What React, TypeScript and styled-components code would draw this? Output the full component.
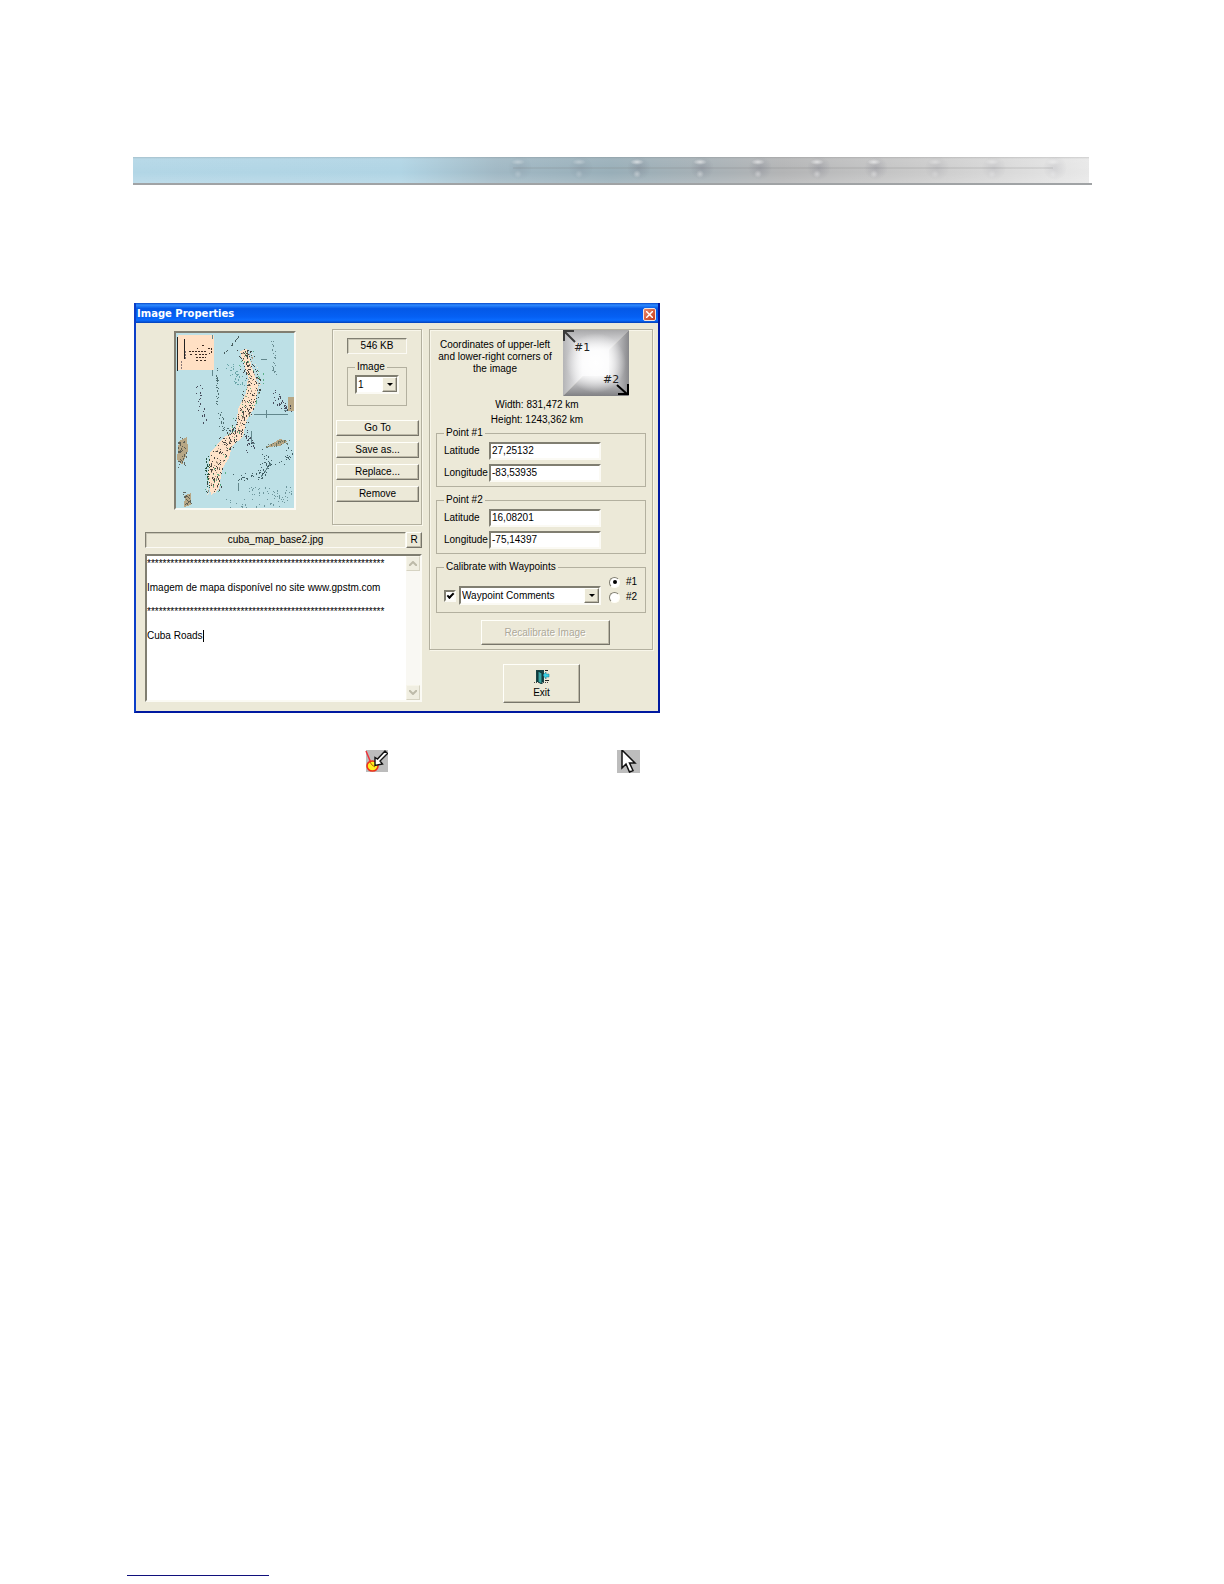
import React, { useState } from "react";
import styled, { createGlobalStyle, css } from "styled-components";

const face = "#ece9d8";
const line = "#b3b09f";
const dark = "#807e71";

const GlobalStyle = createGlobalStyle`
  *, *::before, *::after { box-sizing: border-box; }
  body { margin: 0; background: #fff; }
  button, input, select, textarea, fieldset, legend { font: inherit; color: inherit; margin: 0; border-radius: 0; }
`;

const sunken = css`
  border: 2px solid;
  border-color: ${dark} #fbfaf4 #fbfaf4 ${dark};
`;
const raised = css`
  border: 1px solid;
  border-color: #fffffa #77756a #77756a #fffffa;
  box-shadow: inset -1px -1px 0 #bdb9a8;
  background: ${face};
`;

const Page = styled.div`
  min-height: 100vh;
  padding: 157px 132px 8px 133px;
  display: flex;
  flex-direction: column;
  font: 10px/12px "Liberation Sans", Arial, sans-serif;
  color: #000;
`;

const Banner = styled.header`
  height: 28px;
  padding-right: 3px;
  border-bottom: 2px solid #a0a3a5;
`;
const BannerArt = styled.svg`
  display: block;
  width: 100%;
  height: 26px;
`;

const Dialog = styled.section`
  margin: 118px 0 0 1px;
  max-width: 526px;
  border: 2px solid #0c3fc8;
  border-top: 0;
  border-right-color: #0019a0;
  border-bottom-color: #0019a0;
  background: ${face};
`;
const TitleBar = styled.div`
  height: 20px;
  padding: 2px 2px 0 1px;
  display: flex;
  align-items: center;
  justify-content: space-between;
  background: linear-gradient(#0a48c8 0, #2f8bff 10%, #0458e6 28%, #0560f4 70%, #0a6cff 86%, #0340b8 100%);
`;
const Title = styled.h1`
  margin: 0;
  font: bold 10px/16px "DejaVu Sans", Verdana, sans-serif;
  color: #fff;
`;
const CloseButton = styled.button`
  width: 13px;
  height: 13px;
  padding: 0;
  display: grid;
  place-items: center;
  border: 1px solid #f6e4dc;
  border-radius: 2px;
  background: linear-gradient(135deg, #e88a6c, #c63a18);
`;
const Body = styled.div`
  padding: 6px 5px 8px 9px;
  display: grid;
  grid-template-columns: 277px minmax(0, 1fr);
  column-gap: 7px;
`;
const Column = styled.div`
  display: flex;
  flex-direction: column;
`;
const TopRow = styled.div`
  display: grid;
  grid-template-columns: 1fr 90px;
  height: 196px;
`;
const MapFrame = styled.div`
  ${sunken}
  margin: 2px 0 0 29px;
  width: 122px;
  height: 179px;
`;
const Panel = styled.div`
  border: 1px solid ${line};
  box-shadow: inset 1px 1px 0 #f8f6ea, 1px 1px 0 #f8f6ea;
`;
const ToolPanel = styled(Panel)`
  padding: 8px 2px 0 3px;
  display: flex;
  flex-direction: column;
`;
const Readout = styled.output`
  display: block;
  border: 1px solid;
  border-color: ${dark} #fbfaf4 #fbfaf4 ${dark};
  box-shadow: inset 1px 1px 0 #c9c6b5;
  height: 16px;
  line-height: 14px;
  text-align: center;
`;
const SizeReadout = styled(Readout)`
  margin: 0 12px 0 11px;
`;
const Group = styled.fieldset`
  min-width: 0;
  border: 1px solid ${line};
  padding: 0 7px;
`;
const Legend = styled.legend`
  padding: 0 2px;
`;
const ImageGroup = styled(Group)`
  margin: 7px 12px 0 11px;
  height: 45px;
  padding: 2px 7px 0;
`;
const ButtonStack = styled.div`
  margin-top: 14px;
  display: grid;
  gap: 6px;
`;
const Button = styled.button`
  ${raised}
  height: 16px;
  padding: 0;
  line-height: 12px;
  text-align: center;
`;
const SelectBox = styled.div`
  ${sunken}
  position: relative;
  height: 19px;
  background: #fff;
`;
const Select = styled.select`
  display: block;
  width: 100%;
  height: 15px;
  padding: 0 16px 0 1px;
  border: 0;
  outline: 0;
  appearance: none;
  background: transparent;
`;
const Arrow = styled.span`
  ${raised}
  position: absolute;
  top: 0;
  right: 0;
  width: 15px;
  height: 15px;
  display: grid;
  place-items: center;
  pointer-events: none;
`;
const FileRow = styled.div`
  margin-top: 7px;
  display: grid;
  grid-template-columns: 1fr 16px;
`;
const MemoBox = styled.div`
  ${sunken}
  position: relative;
  margin-top: 6px;
  height: 148px;
  display: grid;
  grid-template-columns: 1fr 14px;
  background: #fff;
`;
const Memo = styled.textarea`
  display: block;
  height: 144px;
  padding: 2px 0;
  border: 0;
  outline: 0;
  resize: none;
  overflow: hidden;
  background: #fff;
  line-height: 12px;
`;
const Caret = styled.span`
  position: absolute;
  left: 56px;
  top: 74px;
  width: 1px;
  height: 12px;
  background: #000;
`;
const ScrollBar = styled.div`
  display: flex;
  flex-direction: column;
  justify-content: space-between;
  background: #f9f8f3;
`;
const ScrollButton = styled.button`
  height: 15px;
  padding: 0;
  display: grid;
  place-items: center;
  border: 1px solid;
  border-color: #f7f5ea #d6d3c2 #d6d3c2 #f7f5ea;
  background: #f0eee1;
`;
const CalibPanel = styled(Panel)`
  height: 321px;
  padding: 0 6px;
  display: flex;
  flex-direction: column;
`;
const Intro = styled.div`
  display: grid;
  grid-template-columns: 118px 66px;
  column-gap: 9px;
  height: 67px;
  text-align: center;
`;
const IntroText = styled.p`
  margin: 9px 0 0;
`;
const Sizes = styled.p`
  margin: 0 8px 0 0;
  line-height: 15px;
  text-align: center;
`;
const PointGroup = styled(Group)`
  height: 60px;
  padding-top: 3px;
  margin-bottom: 7px;
  display: grid;
  grid-template-columns: 45px 112px;
  grid-auto-rows: 17px;
  row-gap: 5px;
  align-items: center;
`;
const TextInput = styled.input`
  ${sunken}
  width: 100%;
  height: 18px;
  padding: 0 1px;
  background: #fff;
  outline: 0;
`;
const CalibGroup = styled(Group)`
  height: 52px;
`;
const CalibRow = styled.div`
  padding-top: 3px;
  display: grid;
  grid-template-columns: 11px 142px 1fr;
  column-gap: 4px;
  align-items: end;
`;
const Check = styled.input`
  appearance: none;
  ${sunken}
  width: 12px;
  height: 12px;
  align-self: end;
  && { margin-bottom: 3px; }
  background: #fff;
  display: grid;
  place-items: center;
  &:checked::before {
    content: "";
    width: 7px;
    height: 4px;
    border: solid #000;
    border-width: 0 0 2px 2px;
    transform: translateY(-1px) rotate(-45deg);
  }
`;
const Radios = styled.div`
  padding: 0 0 2px 4px;
  display: grid;
  gap: 3px;
`;
const RadioLabel = styled.label`
  display: flex;
  align-items: center;
  gap: 6px;
`;
const Radio = styled.input`
  appearance: none;
  width: 11px;
  height: 11px;
  && { border-radius: 50%; }
  border: 1px solid;
  border-color: ${dark} #fffef5 #fffef5 ${dark};
  background: #fff;
  display: grid;
  place-items: center;
  &:checked::before {
    content: "";
    width: 4px;
    height: 4px;
    border-radius: 50%;
    background: #000;
  }
`;
const Recalibrate = styled(Button)`
  align-self: center;
  width: 129px;
  height: 25px;
  margin: 7px 0 0 8px;
  color: #aca899;
  text-shadow: 1px 1px 0 #fff;
`;
const ExitButton = styled(Button)`
  width: 77px;
  height: 39px;
  margin: 14px 0 0 74px;
  display: flex;
  flex-direction: column;
  align-items: center;
  justify-content: center;
  gap: 3px;
`;
const IconRow = styled.div`
  margin: 37px 0 0 232px;
  display: flex;
  gap: 229px;
`;
const Footer = styled.footer`
  margin: auto 0 0 -6px;
  width: 142px;
  border-bottom: 1px solid #10107c;
`;

/* Small seeded generator, so the map's stippling is the same on each draw. */
function seeded(seed: number) {
  let s = seed;
  return () => {
    s = (s * 16807) % 2147483647;
    return s / 2147483647;
  };
}
type Blob = { pts: [number, number][]; spread: number; n: number; color: string };
const spine: [number, number][] = [[68, 19], [71, 30], [77, 42], [77, 56], [72, 70], [67, 84], [60, 98], [48, 112], [41, 126], [38, 142], [38, 158]];
const blobs: Blob[] = [
  { pts: spine, spread: 15, n: 330, color: "#2a2a28" },
  { pts: spine, spread: 14, n: 130, color: "#ffe8d0" },
  { pts: spine, spread: 13, n: 90, color: "#a08c78" },
  { pts: spine, spread: 20, n: 60, color: "#4aa878" },
  { pts: [[52, 30], [60, 44], [68, 50]], spread: 14, n: 40, color: "#5a9a9c" },
  { pts: [[41, 35], [41, 76]], spread: 2, n: 26, color: "#3b5b5d" },
  { pts: [[44, 80], [46, 96], [54, 96]], spread: 5, n: 22, color: "#3b5b5d" },
  { pts: [[97, 8], [98, 42]], spread: 5, n: 20, color: "#5b7e82" },
  { pts: [[48, 20], [62, 3]], spread: 1, n: 14, color: "#344" },
  { pts: [[22, 52], [24, 70], [29, 88]], spread: 7, n: 26, color: "#334" },
  { pts: [[97, 60], [104, 70], [110, 76]], spread: 11, n: 36, color: "#334" },
  { pts: [[6, 106], [6, 132]], spread: 9, n: 50, color: "#50524a" },
  { pts: [[10, 160], [12, 172]], spread: 7, n: 24, color: "#50524a" },
  { pts: [[92, 114], [112, 107]], spread: 7, n: 26, color: "#5d6a58" },
  { pts: [[90, 118], [88, 132], [112, 126], [112, 116]], spread: 9, n: 40, color: "#2e4a50" },
  { pts: [[90, 134], [84, 144], [58, 143]], spread: 10, n: 40, color: "#2e4a50" },
  { pts: [[70, 158], [112, 158], [98, 170], [50, 170]], spread: 14, n: 66, color: "#5f888e" },
  { pts: [[31, 124], [31, 158]], spread: 4, n: 34, color: "#0c3a20" },
  { pts: [[68, 100], [75, 116]], spread: 9, n: 30, color: "#334" },
];
function stipple(b: Blob, seed: number) {
  const rnd = seeded(seed);
  let d = "";
  for (let i = 0; i < b.n; i++) {
    const t = rnd() * (b.pts.length - 1);
    const k = Math.floor(t);
    const f = t - k;
    const [ax, ay] = b.pts[k];
    const [bx, by] = b.pts[k + 1];
    const x = Math.round(ax + (bx - ax) * f + (rnd() - 0.5) * b.spread);
    const y = Math.round(ay + (by - ay) * f + (rnd() - 0.5) * b.spread * 0.7);
    d += `M${x} ${y}h1v${rnd() > 0.8 ? 2 : 1}h-1z`;
  }
  return d;
}

const MapArt = () => (
  <svg width="118" height="175" viewBox="0 0 118 175" role="img" display="block" shapeRendering="crispEdges">
    <rect width="118" height="175" fill="#bde0e6" />
    <rect x="2" y="2" width="36" height="35" fill="#ffe0c4" />
    <path d="M1 4v34M8 6v20" stroke="#222" fill="none" />
    <path d="M5 28v8M9 18v9" stroke="#877" strokeDasharray="2 1" fill="none" />
    <path d="M13 18h18M14 21h3M19 21h2M23 21h8M20 24h10M20 27h2M24 27h2M28 27h3M21 15h1M26 12h2M32 15h3v5h-2" stroke="#3b2a20" strokeDasharray="2 1" fill="none" />
    <path d="M64 18l7-2 6 22 5 14-3 22-9 14-3 16-11 9-3 12-7 11-3 20-8 6-3-18 2-24 14-16 12-6 2-22 8-16 2-16-6-20z" fill="#ffe2c8" />
    <path d="M3 108l8-4 1 14-6 14-5-6zM9 162l6-2v12l-7 2zM112 64h6v14h-6zM90 114l14-8 8 2-8 5z" fill="#b7a785" />
    <path d="M78 81h34M90 77v8M36 2v4M36 37v6M97 34v4M91 26h-6M108 77h4M75 98v12h4M85 144l10-14M62 158v-8" stroke="#62878c" fill="none" />
    {blobs.map((b, i) => (
      <path key={i} d={stipple(b, 91 + i * 37)} fill={b.color} fillOpacity="0.85" />
    ))}
  </svg>
);

const CornersArt = () => (
  <svg width="66" height="66" viewBox="0 0 66 66" role="img">
    <defs>
      <linearGradient id="t" x1="0" y1="0" x2="0" y2="1"><stop offset="0" stopColor="#a9a9ab" /><stop offset="1" stopColor="#f4f4f6" /></linearGradient>
      <linearGradient id="l" x1="0" y1="0" x2="1" y2="0"><stop offset="0" stopColor="#b4b4b6" /><stop offset="1" stopColor="#f6f6f8" /></linearGradient>
      <linearGradient id="r" x1="1" y1="0" x2="0" y2="0"><stop offset="0" stopColor="#88888b" /><stop offset="1" stopColor="#e6e6e8" /></linearGradient>
      <linearGradient id="b" x1="0" y1="1" x2="0" y2="0"><stop offset="0" stopColor="#808083" /><stop offset="1" stopColor="#e2e2e4" /></linearGradient>
      <radialGradient id="c"><stop offset="0" stopColor="#fff" /><stop offset="0.4" stopColor="#fff" stopOpacity="0.8" /><stop offset="1" stopColor="#fff" stopOpacity="0" /></radialGradient>
    </defs>
    <path d="M0 0h66L46 20H20z" fill="url(#t)" />
    <path d="M0 0l20 20v26L0 66z" fill="url(#l)" />
    <path d="M66 0v66L46 46V20z" fill="url(#r)" />
    <path d="M0 66h66L46 46H20z" fill="url(#b)" />
    <path d="M20 20h26v26H20z" fill="#f4f4f6" />
    <circle cx="33" cy="33" r="30" fill="url(#c)" />
    <path d="M1 11V1h10M1 1l11 11" stroke="#3a3a3a" strokeWidth="2" fill="none" />
    <path d="M65 54v10H55M64 64L54 55" stroke="#000" strokeWidth="2" fill="none" />
    <text x="11" y="21" fontFamily="DejaVu Sans" fontSize="11" fill="#222">#1</text>
    <text x="40" y="53" fontFamily="DejaVu Sans" fontSize="11" fill="#222">#2</text>
  </svg>
);

const Triangle = () => (
  <svg width="6" height="3" viewBox="0 0 6 3"><path d="M0 0h6L3 3z" fill="#000" /></svg>
);
const Chevron = ({ up }: { up?: boolean }) => (
  <svg width="8" height="5" viewBox="0 0 8 5"><path d={up ? "M0 5l4-4 4 4" : "M0 0l4 4 4-4"} fill="none" stroke="#bdbaa9" strokeWidth="2" /></svg>
);
const ExitIcon = () => (
  <svg width="16" height="15" viewBox="0 0 16 15">
    <path d="M2 13V1h8v12" fill="#174446" />
    <path d="M4 2l4 2v11l-4-2z" fill="#3aa5a5" stroke="#0c3032" />
    <path d="M9 6l3-3v2h3v3h-3v2z" fill="#38d3e8" stroke="#1b6f80" strokeWidth="0.5" />
    <path d="M11 1.500h3M11 11.500h4" stroke="#222" />
    <path d="M0 13.500h3M9 13.500h6" stroke="#444" strokeDasharray="1 1" />
  </svg>
);
const CalibrateIcon = () => (
  <svg width="23" height="23" viewBox="0 0 23 23">
    <rect x="1" width="22" height="22" fill="#bcbcbc" />
    <path d="M1 1l5 12" stroke="#ee3038" strokeWidth="1.500" />
    <ellipse cx="7.500" cy="16" rx="5.500" ry="5" fill="#ffee20" stroke="#f0301c" strokeWidth="1.600" />
    <path d="M5 12l2 3 3 2" stroke="#c06010" fill="none" />
    <path d="M20 1l2.500 2.500-7.500 7.500 2.500 3-7.500 1.500V7.500l2.500 1.500z" fill="#fff" stroke="#111" strokeWidth="1.400" />
  </svg>
);
const CursorIcon = () => (
  <svg width="23" height="23" viewBox="0 0 23 23">
    <rect width="23" height="23" fill="#bdbdbd" />
    <path d="M5 0v18l4-4 3.500 8 3.500-1.500-3.500-7.500H18z" fill="#fff" stroke="#111" strokeWidth="1.500" />
  </svg>
);

const rivets = [385, 446, 504, 567, 625, 684, 741, 802, 859, 920];
const BannerDrawing = () => (
  <BannerArt viewBox="0 0 956 26" preserveAspectRatio="none">
    <defs>
      <linearGradient id="bar">
        <stop offset="0" stopColor="#b2d6e6" /><stop offset="0.28" stopColor="#b0d4e4" />
        <stop offset="0.38" stopColor="#a0b8c4" /><stop offset="0.5" stopColor="#98aeb8" />
        <stop offset="0.6" stopColor="#a6b0b5" /><stop offset="0.68" stopColor="#b3b4b5" />
        <stop offset="0.82" stopColor="#c9c9c9" /><stop offset="1" stopColor="#e8e8e8" />
      </linearGradient>
      <linearGradient id="sheen" x1="0" y1="0" x2="0" y2="1">
        <stop offset="0" stopColor="#777" stopOpacity="0.25" /><stop offset="0.1" stopColor="#fff" stopOpacity="0.08" />
        <stop offset="0.6" stopColor="#fff" stopOpacity="0" /><stop offset="1" stopColor="#fff" stopOpacity="0.16" />
      </linearGradient>
      <radialGradient id="rivet">
        <stop offset="0" stopColor="#667" stopOpacity="0.24" /><stop offset="1" stopColor="#667" stopOpacity="0" />
      </radialGradient>
      <radialGradient id="glint">
        <stop offset="0" stopColor="#fff" stopOpacity="0.6" /><stop offset="1" stopColor="#fff" stopOpacity="0" />
      </radialGradient>
    </defs>
    <rect width="956" height="26" fill="url(#bar)" />
    <rect width="956" height="26" fill="url(#sheen)" />
    <path d="M380 11h540" stroke="#777" strokeOpacity="0.14" strokeWidth="2" />
    {rivets.map((x, i) => (
      <g key={x} opacity={i < 2 ? 0.5 : i > 6 ? 0.5 : 1}>
        <ellipse cx={x + 2} cy="11" rx="12" ry="12" fill="url(#rivet)" />
        <ellipse cx={x} cy="5" rx="7" ry="3" fill="url(#glint)" />
        <ellipse cx={x} cy="17" rx="4" ry="4" fill="url(#glint)" fillOpacity="0.6" />
      </g>
    ))}
  </BannerArt>
);

const stars = "*".repeat(61);
const memoText = `${stars}\n\nImagem de mapa disponível no site www.gpstm.com\n\n${stars}\n\nCuba Roads`;

function Point({ n, lat, lon }: { n: number; lat: string; lon: string }) {
  return (
    <PointGroup>
      <Legend>Point #{n}</Legend>
      <label htmlFor={`lat${n}`}>Latitude</label>
      <TextInput id={`lat${n}`} defaultValue={lat} />
      <label htmlFor={`lon${n}`}>Longitude</label>
      <TextInput id={`lon${n}`} defaultValue={lon} />
    </PointGroup>
  );
}

export default function App() {
  const [corner, setCorner] = useState(1);
  return (
    <>
      <GlobalStyle />
      <Page>
        <Banner><BannerDrawing /></Banner>
        <Dialog>
          <TitleBar>
            <Title>Image Properties</Title>
            <CloseButton type="button">
              <svg width="7" height="7" viewBox="0 0 7 7"><path d="M0 0l7 7M7 0L0 7" stroke="#fff" strokeWidth="1.500" /></svg>
            </CloseButton>
          </TitleBar>
          <Body>
            <Column>
              <TopRow>
                <MapFrame><MapArt /></MapFrame>
                <ToolPanel>
                  <SizeReadout>546 KB</SizeReadout>
                  <ImageGroup>
                    <Legend id="image-legend">Image</Legend>
                    <SelectBox>
                      <Select aria-labelledby="image-legend" defaultValue="1"><option>1</option></Select>
                      <Arrow><Triangle /></Arrow>
                    </SelectBox>
                  </ImageGroup>
                  <ButtonStack>
                    <Button type="button">Go To</Button>
                    <Button type="button">Save as...</Button>
                    <Button type="button">Replace...</Button>
                    <Button type="button">Remove</Button>
                  </ButtonStack>
                </ToolPanel>
              </TopRow>
              <FileRow>
                <Readout id="file">cuba_map_base2.jpg</Readout>
                <Button type="button">R</Button>
              </FileRow>
              <MemoBox>
                <Memo aria-labelledby="file" spellCheck={false} defaultValue={memoText} />
                <ScrollBar>
                  <ScrollButton type="button"><Chevron up /></ScrollButton>
                  <ScrollButton type="button"><Chevron /></ScrollButton>
                </ScrollBar>
                <Caret />
              </MemoBox>
            </Column>
            <Column>
              <CalibPanel>
                <Intro>
                  <IntroText>Coordinates of upper-left and lower-right corners of the image</IntroText>
                  <CornersArt />
                </Intro>
                <Sizes>Width: 831,472 km<br />Height: 1243,362 km</Sizes>
                <Point n={1} lat="27,25132" lon="-83,53935" />
                <Point n={2} lat="16,08201" lon="-75,14397" />
                <CalibGroup>
                  <Legend id="calib-legend">Calibrate with Waypoints</Legend>
                  <CalibRow>
                    <Check type="checkbox" defaultChecked aria-labelledby="calib-legend" />
                    <SelectBox>
                      <Select aria-labelledby="calib-legend" defaultValue="Waypoint Comments"><option>Waypoint Comments</option></Select>
                      <Arrow><Triangle /></Arrow>
                    </SelectBox>
                    <Radios>
                      {[1, 2].map((n) => (
                        <RadioLabel key={n}>
                          <Radio type="radio" name="corner" checked={corner === n} onChange={() => setCorner(n)} />#{n}
                        </RadioLabel>
                      ))}
                    </Radios>
                  </CalibRow>
                </CalibGroup>
                <Recalibrate type="button" disabled>Recalibrate Image</Recalibrate>
              </CalibPanel>
              <ExitButton type="button"><ExitIcon />Exit</ExitButton>
            </Column>
          </Body>
        </Dialog>
        <IconRow><CalibrateIcon /><CursorIcon /></IconRow>
        <Footer />
      </Page>
    </>
  );
}
